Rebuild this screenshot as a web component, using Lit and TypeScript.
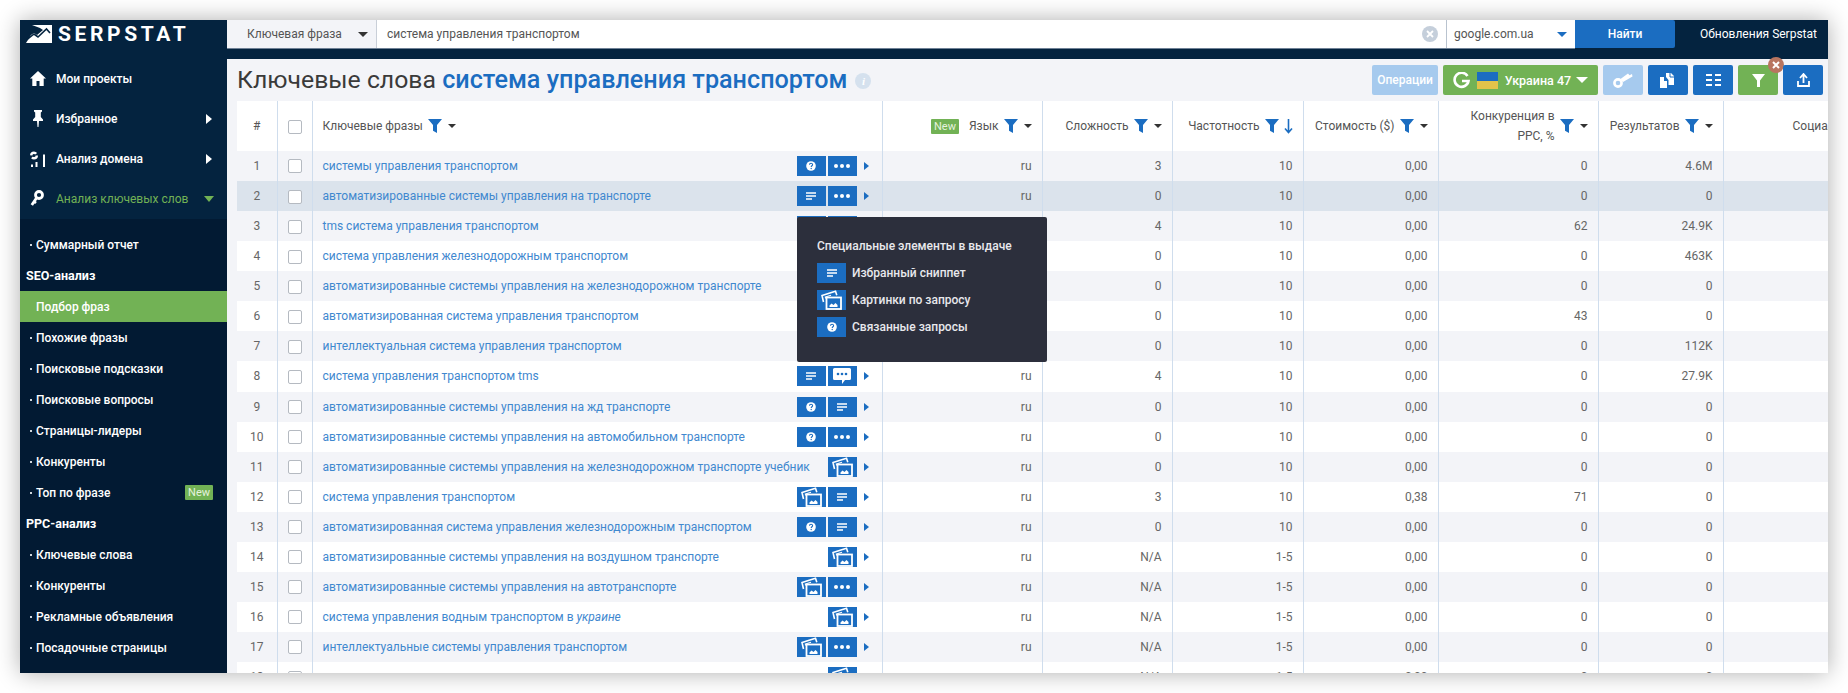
import { LitElement, html, css } from "lit";
import { customElement } from "lit/decorators.js";

type Act = "q" | "dots" | "lines" | "img" | "chat";

const rows: [string, Act[], string, string, string, string, string][] = [
  ["системы управления транспортом", ["q", "dots"], "3", "10", "0,00", "0", "4.6M"],
  ["автоматизированные системы управления на транспорте", ["lines", "dots"], "0", "10", "0,00", "0", "0"],
  ["tms система управления транспортом", ["lines", "dots"], "4", "10", "0,00", "62", "24.9K"],
  ["система управления железнодорожным транспортом", ["lines", "dots"], "0", "10", "0,00", "0", "463K"],
  ["автоматизированные системы управления на железнодорожном транспорте", ["lines"], "0", "10", "0,00", "0", "0"],
  ["автоматизированная система управления транспортом", ["lines"], "0", "10", "0,00", "43", "0"],
  ["интеллектуальная система управления транспортом", ["lines"], "0", "10", "0,00", "0", "112K"],
  ["система управления транспортом tms", ["lines", "chat"], "4", "10", "0,00", "0", "27.9K"],
  ["автоматизированные системы управления на жд транспорте", ["q", "lines"], "0", "10", "0,00", "0", "0"],
  ["автоматизированные системы управления на автомобильном транспорте", ["q", "dots"], "0", "10", "0,00", "0", "0"],
  ["автоматизированные системы управления на железнодорожном транспорте учебник", ["img"], "0", "10", "0,00", "0", "0"],
  ["система управления транспортом", ["img", "lines"], "3", "10", "0,38", "71", "0"],
  ["автоматизированная система управления железнодорожным транспортом", ["q", "lines"], "0", "10", "0,00", "0", "0"],
  ["автоматизированные системы управления на воздушном транспорте", ["img"], "N/A", "1-5", "0,00", "0", "0"],
  ["автоматизированные системы управления на автотранспорте", ["img", "dots"], "N/A", "1-5", "0,00", "0", "0"],
  ["система управления водным транспортом в <i>украине</i>", ["img"], "N/A", "1-5", "0,00", "0", "0"],
  ["интеллектуальные системы управления транспортом", ["img", "dots"], "N/A", "1-5", "0,00", "0", "0"],
  ["", ["img"], "N/A", "1-5", "0,00", "0", "0"],
];

const actIcon = (a: Act) => {
  switch (a) {
    case "q":
      return html`<svg width="12" height="12" viewBox="0 0 12 12"><circle cx="6" cy="6" r="4.800" fill="#fff"/><path d="M4.500 4.800c0-2 3.100-2 3.100-.1 0 1.100-1.400 1.100-1.400 2.300" fill="none" stroke="#1b6dc1" stroke-width="1.100"/><circle cx="6.200" cy="8.500" r=".7" fill="#1b6dc1"/></svg>`;
    case "dots":
      return html`<svg width="18" height="6" viewBox="0 0 18 6"><circle cx="3" cy="3" r="2" fill="#fff"/><circle cx="9" cy="3" r="2" fill="#fff"/><circle cx="15" cy="3" r="2" fill="#fff"/></svg>`;
    case "lines":
      return html`<svg width="10" height="8" viewBox="0 0 10 8"><path d="M0 1h10M0 4h10M0 7h6" stroke="#fff" stroke-width="1.400"/></svg>`;
    case "chat":
      return html`<svg width="20" height="18" viewBox="0 0 20 18"><path d="M2.500 1h15A1.500 1.500 0 0 1 19 2.500v9a1.500 1.500 0 0 1-1.500 1.500H13l-3 4v-4H2.500A1.500 1.500 0 0 1 1 11.500v-9A1.500 1.500 0 0 1 2.500 1z" fill="#fff"/><circle cx="6" cy="7" r="1.300" fill="#1b6dc1"/><circle cx="10" cy="7" r="1.300" fill="#1b6dc1"/><circle cx="14" cy="7" r="1.300" fill="#1b6dc1"/></svg>`;
    case "img":
      return html`<svg width="21" height="20" viewBox="0 0 21 20"><path d="M2.500 12 1 5.500 14.500 1.200l1.300 4" fill="none" stroke="#fff" stroke-width="1.600"/><path d="M4.800 8.500 4.300 7 10 5.200" fill="none" stroke="#fff" stroke-width="1.100"/><rect x="5.500" y="7.500" width="14.500" height="11.500" fill="#1b6dc1" stroke="#fff" stroke-width="1.800"/><path d="M8.500 17v-1.500l2-2 2 1.500 2-2 2 2V17z" fill="#fff"/></svg>`;
  }
};

const funnel = html`<svg class="fn" width="14" height="16" viewBox="0 0 14 16"><path d="M0 1h14L9 7v8l-4-2.200V7z" fill="#1b6dc1"/></svg>`;
const caret = html`<span class="caret"></span>`;

@customElement("app-root")
export class AppRoot extends LitElement {
  static styles = css`
    :host {
      display: block;
      height: 693px;
      padding: 20px;
      box-sizing: border-box;
      background: #fff;
      font-family: Roboto, "Liberation Sans", sans-serif;
      font-size: 12px;
      color: #666;
    }
    * { box-sizing: border-box; }
    .frame {
      display: flex;
      height: 653px;
      background: #04233f;
      box-shadow: 0 0 22px rgba(0, 0, 0, 0.32);
      overflow: hidden;
    }

    /* sidebar */
    .side {
      flex: 0 0 207px;
      display: flex;
      flex-direction: column;
      background: #04233f;
      color: #fff;
    }
    .logo {
      display: flex;
      align-items: center;
      gap: 6px;
      height: 28px;
      padding-left: 6px;
      margin-bottom: 10.500px;
    }
    .logo span {
      font: 700 21px Roboto, sans-serif;
      letter-spacing: 3.600px;
      color: #fff;
    }
    .nav {
      display: flex;
      align-items: center;
      height: 40px;
      padding-left: 10px;
      font-weight: 500;
      font-size: 12px;
    }
    .nav .ico { width: 26px; display: flex; }
    .nav .arr {
      margin-left: auto;
      margin-right: 15px;
      border-left: 6px solid #fff;
      border-top: 5.500px solid transparent;
      border-bottom: 5.500px solid transparent;
    }
    .nav.on { color: #72b255; font-weight: 400; }
    .nav.on .arr {
      border-left: 5.500px solid transparent;
      border-right: 5.500px solid transparent;
      border-top: 6px solid #72b255;
      border-bottom: 0;
      margin-right: 13px;
    }
    .sub {
      flex: 1;
      background: #021a33;
      padding-top: 10.500px;
    }
    .sub div {
      height: 31px;
      line-height: 30px;
      padding-left: 16px;
      font-size: 12px;
      font-weight: 500;
      display: flex;
      align-items: center;
    }
    .sub .it::before {
      content: "";
      width: 2px;
      height: 2px;
      background: #cfd6dd;
      margin: 1px 4px 0 -6px;
      flex: none;
    }
    .sub .hd { font-weight: 700; padding-left: 6px; font-size: 12.500px; }
    .sub .act { background: #72b255; }
    .sub .new {
      margin-left: auto;
      margin-right: 14px;
      background: #72b255;
      color: #e6f2df;
      font-size: 11px;
      font-weight: 400;
      line-height: 15px;
      height: 15px;
      padding: 0 3px;
      border-radius: 1px;
    }

    /* main */
    .main {
      flex: 1;
      min-width: 0;
      display: flex;
      flex-direction: column;
      position: relative;
    }
    .top {
      display: flex;
      height: 28px;
      margin-bottom: 11px;
      flex: none;
      color: #555;
    }
    .kind, .q, .eng { box-shadow: 0 1px 0 #6f8196; background: #fff; }
    .top .kind {
      width: 150px;
      background: #f3f4f8;
      display: flex;
      align-items: center;
      justify-content: space-between;
      padding: 0 8px 0 20px;
      border-right: 1px solid #c9cfd8;
    }
    .down {
      border-left: 5px solid transparent;
      border-right: 5px solid transparent;
      border-top: 5px solid #333;
    }
    .q {
      flex: 1;
      display: flex;
      align-items: center;
      justify-content: space-between;
      padding: 0 8px 0 10px;
      border-right: 1px solid #b9c3cf;
    }
    .clear {
      width: 16px;
      height: 16px;
      border-radius: 50%;
      background: #c5cfdb;
      display: flex;
      align-items: center;
      justify-content: center;
    }
    .eng {
      width: 128px;
      display: flex;
      align-items: center;
      justify-content: space-between;
      padding: 0 8px 0 7px;
    }
    .eng .down { border-top-color: #1b6dc1; }
    .find {
      width: 100px;
      background: #1b6dc1;
      color: #fff;
      font-weight: 500;
      display: flex;
      align-items: center;
      justify-content: center;
      border-radius: 0 2px 2px 0;
    }
    .upd {
      width: 153px;
      color: #fff;
      display: flex;
      align-items: center;
      padding-left: 25px;
      white-space: nowrap;
    }

    .content {
      flex: 1;
      min-height: 0;
      background: #f3f4f8;
      display: flex;
      flex-direction: column;
    }
    .titlebar {
      flex: none;
      height: 42px;
      display: flex;
      align-items: center;
      padding: 0 5px 0 10px;
    }
    h1 {
      margin: 0;
      font-size: 24.800px;
      font-weight: 400;
      color: #3a3a3a;
      white-space: nowrap;
      line-height: 42px;
    }
    h1 b { font-size: 25.200px; font-weight: 500; color: #1b6dc1; }
    .info {
      width: 16px;
      height: 16px;
      border-radius: 50%;
      background: #d5e1ee;
      color: #fff;
      font: italic 700 11px/16px "Liberation Serif", serif;
      text-align: center;
      margin: 2px 0 0 8px;
    }
    .tools {
      margin-left: auto;
      display: flex;
      gap: 5px;
    }
    .tb {
      height: 30px;
      width: 40px;
      border-radius: 2px;
      background: #1b6dc1;
      display: flex;
      align-items: center;
      justify-content: center;
      color: #fff;
      font-weight: 700;
      position: relative;
    }
    .tb.light { background: #a6caee; }
    .tb.green { background: #72b255; }
    .tb.ops { width: 66px; font-weight: 500; }
    .tb.geo { width: 155px; gap: 7px; font-size: 12.500px; font-weight: 500; }
    .flag {
      width: 21px;
      height: 17px;
      background: linear-gradient(#1b6dc1 50%, #e2c34a 50%);
    }
    .geo .down { border-top-color: #fff; border-left-width: 6px; border-right-width: 6px; border-top-width: 6px; margin-left: -2px; }
    .x {
      position: absolute;
      right: -6px;
      top: -8px;
      width: 16px;
      height: 16px;
      border-radius: 50%;
      background: #b87560;
      display: flex;
      align-items: center;
      justify-content: center;
    }

    /* table */
    .wrap {
      flex: 1;
      min-height: 0;
      margin-left: 10px;
      overflow: hidden;
      background: #fff;
    }
    table {
      border-collapse: collapse;
      table-layout: fixed;
      width: 1690px;
    }
    th {
      height: 50px;
      background: #fff;
      font-weight: 400;
      color: #555;
      text-align: right;
      padding: 0 10px;
      border-right: 1px solid #cfdded;
      line-height: 20px;
    }
    td {
      height: 30.070px;
      padding: 0 10px;
      text-align: right;
      border-right: 1px solid #cfdded;
      white-space: nowrap;
    }
    tr.odd td { background: #f3f4f8; }
    tr.sel td { background: #dbe3ec; }
    td.c, th.c { text-align: center; padding: 0; }
    th.l { text-align: left; }
    .hc {
      display: flex;
      align-items: center;
      justify-content: flex-end;
      gap: 5px;
    }
    th.l .hc { justify-content: flex-start; }
    .caret {
      border-left: 4px solid transparent;
      border-right: 4px solid transparent;
      border-top: 4px solid #333;
      margin-left: 1px;
    }
    .nw {
      background: #72b255;
      color: #e6f2df;
      font-size: 11px;
      line-height: 15px;
      padding: 0 3px;
      border-radius: 1px;
      margin-right: 5px;
    }
    .cb {
      display: inline-block;
      width: 14px;
      height: 14px;
      border: 1px solid #b5bac1;
      border-radius: 2px;
      background: #fff;
      vertical-align: middle;
    }
    .phr { display: flex; align-items: center; }
    .phr a { color: #3f88cf; flex: 1; text-align: left; }
    .phr i { font-style: italic; }
    .acts { display: flex; gap: 2px; }
    .ab {
      width: 29px;
      height: 20px;
      background: #1b6dc1;
      display: flex;
      align-items: center;
      justify-content: center;
      overflow: hidden;
    }
    .ab svg { flex: none; }
    .more {
      margin: 0 3px 0 7px;
      border-left: 5px solid #1b6dc1;
      border-top: 4.500px solid transparent;
      border-bottom: 4.500px solid transparent;
    }

    /* tooltip over row 3 */
    .tip {
      position: absolute;
      left: 570px;
      top: 197px;
      width: 250px;
      height: 145px;
      background: #2c2f3c;
      border-radius: 2px;
      padding: 21px 20px;
      color: #e8e8ec;
      font-weight: 500;
      z-index: 3;
    }
    .tip .t { line-height: 16px; margin-bottom: 8px; }
    .tip .r {
      display: flex;
      align-items: center;
      gap: 6px;
      height: 21px;
      margin-bottom: 6px;
    }
  `;

  private nav(label: string, icon: unknown, arrow: boolean, on = false) {
    return html`<div class="nav ${on ? "on" : ""}">
      <span class="ico">${icon}</span>${label}${arrow ? html`<span class="arr"></span>` : ""}
    </div>`;
  }

  private th(label: unknown, end: unknown = caret, extra: unknown = "") {
    return html`<th><div class="hc">${extra}<span>${label}</span>${funnel}${end}</div></th>`;
  }

  render() {
    return html`
      <div class="frame">
        <aside class="side">
          <div class="logo">
            <svg width="26" height="18" viewBox="0 0 26 18">
              <path d="M6 0h20v18H0l5-8 3-2 3 2 6-5-3-2z" fill="#fff"/>
              <path d="M0.500 15 8 9l4 3 8.500-8 3.500 4" fill="none" stroke="#04233f" stroke-width="1.600"/>
            </svg>
            <span>SERPSTAT</span>
          </div>
          ${this.nav("Мои проекты", html`<svg width="16" height="15" viewBox="0 0 16 15"><path d="M8 0 0 7.500h2.300V15H6.500v-5h3v5h4.200V7.500H16z" fill="#fff"/></svg>`, false)}
          ${this.nav("Избранное", html`<svg width="14" height="17" viewBox="0 0 14 17" style="margin-left:1px"><path d="M3 0h8v1.500L9.800 2.500V7L12 9.500V11H8l-.5 6h-1L6 11H2V9.500L4.200 7V2.500L3 1.500z" fill="#fff"/></svg>`, true)}
          ${this.nav("Анализ домена", html`<svg width="16" height="16" viewBox="0 0 16 16"><circle cx="4" cy="4.500" r="2.800" fill="none" stroke="#fff" stroke-width="2.400" stroke-dasharray="6.500 2.300"/><path d="M1 13.500h2V16H1zM5.500 11h2v5h-2zM13 3.500h2V16h-2z" fill="#fff"/></svg>`, true)}
          ${this.nav("Анализ ключевых слов", html`<svg width="14" height="17" viewBox="0 0 14 17"><circle cx="9" cy="5" r="3.500" fill="none" stroke="#fff" stroke-width="2.800"/><path d="M6.500 8 1.800 15M4 11.500l2 1.500" stroke="#fff" stroke-width="2.800"/></svg>`, true, true)}
          <div class="sub">
            <div class="it">Суммарный отчет</div>
            <div class="hd">SEO-анализ</div>
            <div class="act">Подбор фраз</div>
            <div class="it">Похожие фразы</div>
            <div class="it">Поисковые подсказки</div>
            <div class="it">Поисковые вопросы</div>
            <div class="it">Страницы-лидеры</div>
            <div class="it">Конкуренты</div>
            <div class="it">Топ по фразе<span class="new">New</span></div>
            <div class="hd">PPC-анализ</div>
            <div class="it">Ключевые слова</div>
            <div class="it">Конкуренты</div>
            <div class="it">Рекламные объявления</div>
            <div class="it">Посадочные страницы</div>
          </div>
        </aside>

        <div class="main">
          <div class="top">
            <div class="kind">Ключевая фраза<span class="down"></span></div>
            <div class="q">система управления транспортом
              <span class="clear"><svg width="8" height="8" viewBox="0 0 8 8"><path d="M1 1l6 6M7 1 1 7" stroke="#fff" stroke-width="1.800"/></svg></span>
            </div>
            <div class="eng">google.com.ua<span class="down"></span></div>
            <div class="find">Найти</div>
            <div class="upd">Обновления Serpstat</div>
          </div>

          <div class="content">
            <div class="titlebar">
              <h1>Ключевые слова <b>система управления транспортом</b></h1>
              <span class="info">i</span>
              <div class="tools">
                <div class="tb light ops">Операции</div>
                <div class="tb green geo">
                  <svg width="17" height="17" viewBox="0 0 17 17"><path d="M14.500 4A7 7 0 1 0 15.500 9H9" fill="none" stroke="#fff" stroke-width="2.600"/></svg>
                  <span class="flag"></span>Украина 47<span class="down"></span>
                </div>
                <div class="tb light"><svg width="20" height="16" viewBox="0 0 20 16"><circle cx="5" cy="11" r="3.600" fill="none" stroke="#fff" stroke-width="2.600"/><path d="M7.500 7 15 1.500l1.500 1.800L19 2l.5 2.500-9.500 5.500z" fill="#fff"/></svg></div>
                <div class="tb"><svg width="16" height="16" viewBox="0 0 16 16"><path d="M0 5h4v4h3v7H0z" fill="#fff"/><path d="M6 1h5l3 3v9H8.500V8L6 5z" fill="#fff"/><path d="M10 1v4h4" fill="none" stroke="#1b6dc1"/></svg></div>
                <div class="tb"><svg width="15" height="12" viewBox="0 0 15 12"><path d="M0 1h6M9 1h6M0 6h6M9 6h6M0 11h6M9 11h6" stroke="#fff" stroke-width="2"/></svg></div>
                <div class="tb green"><svg width="13" height="13" viewBox="0 0 13 13"><path d="M0 0h13L8 6.500V13H5V6.500z" fill="#fff"/></svg>
                  <span class="x"><svg width="8" height="8" viewBox="0 0 8 8"><path d="M1 1l6 6M7 1 1 7" stroke="#fff" stroke-width="2"/></svg></span>
                </div>
                <div class="tb"><svg width="13" height="14" viewBox="0 0 13 14"><path d="M1 8v5h11V8" fill="none" stroke="#fff" stroke-width="1.800"/><path d="M6.500 10V2M3 5l3.500-4L10 5" fill="none" stroke="#fff" stroke-width="1.800"/></svg></div>
              </div>
            </div>

            <div class="wrap">
              <table>
                <colgroup>
                  <col style="width:40px" /><col style="width:35px" /><col style="width:570px" /><col style="width:160px" /><col style="width:130px" /><col style="width:131px" /><col style="width:135px" /><col style="width:160px" /><col style="width:125px" /><col />
                </colgroup>
                <thead>
                  <tr>
                    <th class="c">#</th>
                    <th class="c"><span class="cb"></span></th>
                    <th class="l"><div class="hc">Ключевые фразы ${funnel}${caret}</div></th>
                    ${this.th("Язык", caret, html`<span class="nw">New</span>`)}
                    ${this.th("Сложность")}
                    ${this.th("Частотность", html`<svg width="9" height="15" viewBox="0 0 9 15"><path d="M4.500 0v13M1 9.500l3.500 4 3.500-4" fill="none" stroke="#1b6dc1" stroke-width="1.600"/></svg>`)}
                    ${this.th("Стоимость ($)")}
                    ${this.th(html`Конкуренция в<br />PPC, %`)}
                    ${this.th("Результатов")}
                    <th class="l" style="padding-left:69px;white-space:nowrap">Социальные домены</th>
                  </tr>
                </thead>
                <tbody>
                  ${rows.map(
                    (r, i) => html`<tr class="${i === 1 ? "sel" : i % 2 === 0 ? "odd" : ""}">
                      <td class="c">${i + 1}</td>
                      <td class="c"><span class="cb"></span></td>
                      <td>
                        <div class="phr">
                          <a .innerHTML=${r[0]}></a>
                          <span class="acts">${r[1].map((a) => html`<span class="ab">${actIcon(a)}</span>`)}</span>
                          <span class="more"></span>
                        </div>
                      </td>
                      <td>ru</td>
                      <td>${r[2]}</td>
                      <td>${r[3]}</td>
                      <td>${r[4]}</td>
                      <td>${r[5]}</td>
                      <td>${r[6]}</td>
                      <td></td>
                    </tr>`
                  )}
                </tbody>
              </table>
            </div>
          </div>

          <div class="tip">
            <div class="t">Специальные элементы в выдаче</div>
            <div class="r"><span class="ab">${actIcon("lines")}</span>Избранный сниппет</div>
            <div class="r"><span class="ab">${actIcon("img")}</span>Картинки по запросу</div>
            <div class="r"><span class="ab">${actIcon("q")}</span>Связанные запросы</div>
          </div>
        </div>
      </div>
    `;
  }
}
